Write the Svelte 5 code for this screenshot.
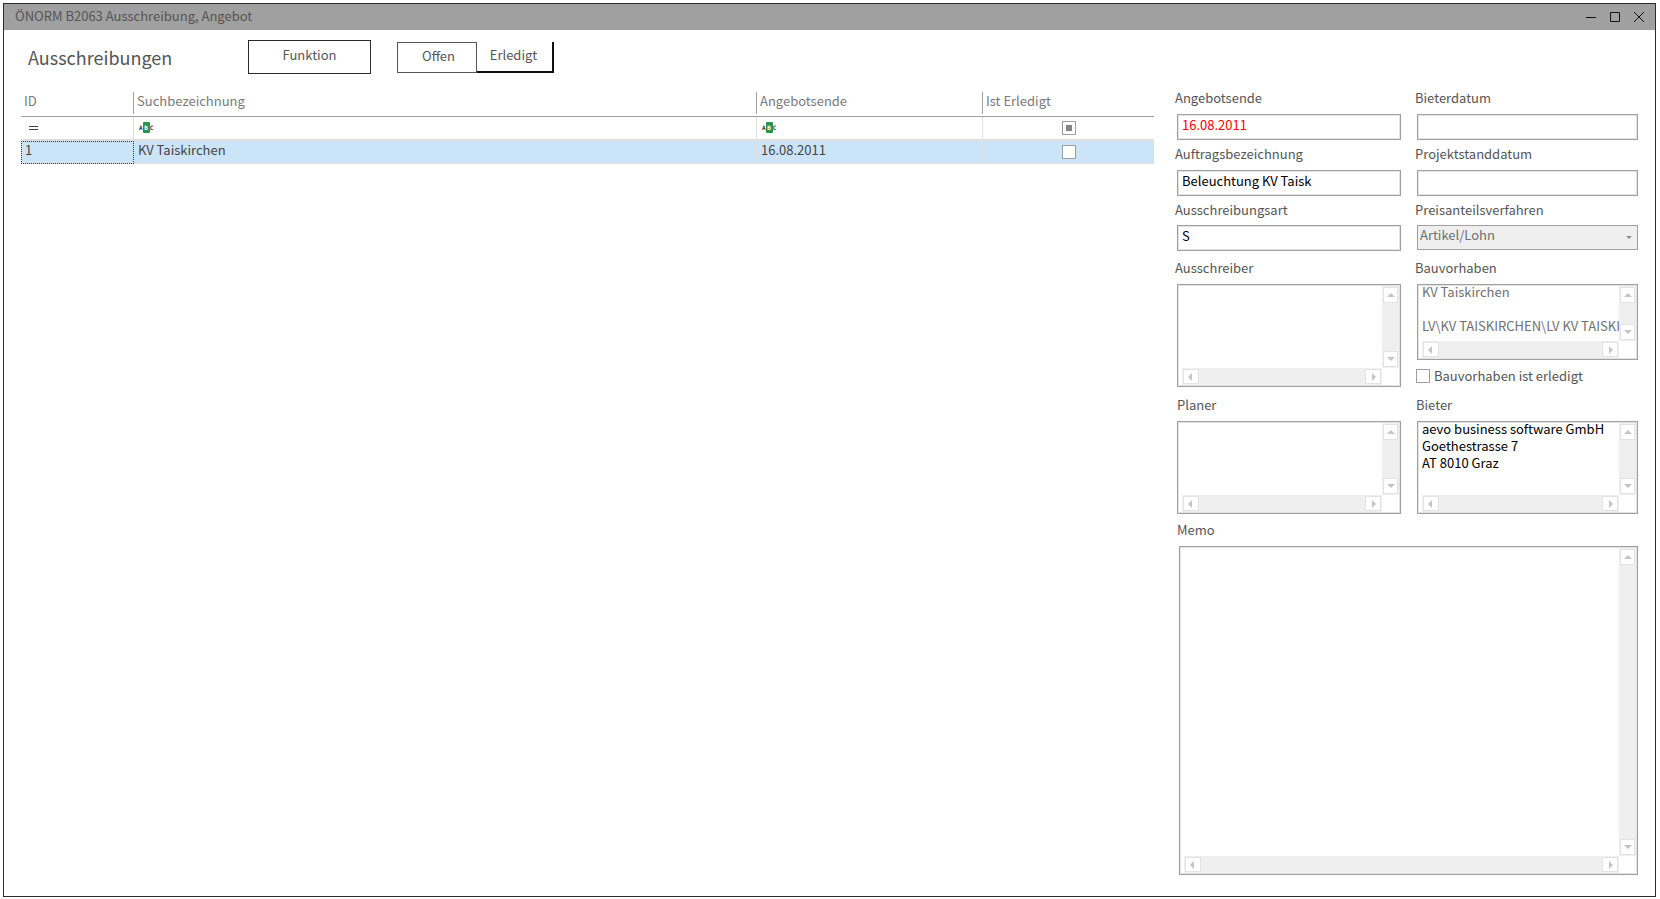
<script>
	let offers = [{ id: 1, name: 'KV Taiskirchen', end: '16.08.2011', done: false }];
	let filterDone = $state(true);

	let form = $state({
		end: '16.08.2011',
		bidDate: '',
		title: 'Beleuchtung KV Taisk',
		stateDate: '',
		kind: 'S',
		method: 'Artikel/Lohn',
		publisher: '',
		project: 'KV Taiskirchen\n\nLV\\KV TAISKIRCHEN\\LV KV TAISKIRCHEN',
		projectDone: false,
		planner: '',
		bidder: 'aevo business software GmbH\nGoethestrasse 7\nAT 8010 Graz',
		memo: ''
	});

	function scroll(id, x, y) {
		document.getElementById(id).scrollBy(x * 17, y * 17);
	}
</script>

{#snippet arrow(id, dir, label, x, y, d)}
	<button class="arrow {dir}" type="button" tabindex="-1" aria-label={label} onclick={() => scroll(id, x, y)}>
		<svg viewBox="0 0 8 8" width="8" height="8"><path {d} /></svg>
	</button>
{/snippet}

{#snippet area(id, label, key, readonly)}
	<label for={id}>{label}</label>
	<div class="area">
		<textarea {id} bind:value={form[key]} {readonly} wrap="off" spellcheck="false"></textarea>
		<div class="bar vertical">
			{@render arrow(id, 'up', 'Nach oben', 0, -1, 'M0 6h8L4 2z')}
			{@render arrow(id, 'down', 'Nach unten', 0, 1, 'M0 2h8L4 6z')}
		</div>
		<div class="bar horizontal">
			{@render arrow(id, 'left', 'Nach links', -1, 0, 'M5 0v8L1 4z')}
			{@render arrow(id, 'right', 'Nach rechts', 1, 0, 'M3 0v8l4-4z')}
		</div>
	</div>
{/snippet}

{#snippet abc()}
	<span class="abc"><span>A</span><b>B</b><span>C</span></span>
{/snippet}

<div class="window">
	<header class="titlebar">
		<span class="title">ÖNORM B2063 Ausschreibung, Angebot</span>
		<button type="button" aria-label="Minimieren">
			<svg viewBox="0 0 10 10"><path d="M0 5.5h10" /></svg>
		</button>
		<button type="button" aria-label="Maximieren">
			<svg viewBox="0 0 10 10"><path d="M.5.5h9v9h-9z" /></svg>
		</button>
		<button type="button" aria-label="Schließen">
			<svg viewBox="0 0 10 10"><path d="M0 0l10 10M10 0L0 10" /></svg>
		</button>
	</header>

	<main>
		<section class="list">
			<div class="toolbar">
				<h1>Ausschreibungen</h1>
				<button class="function" type="button">Funktion</button>
				<div class="tabs">
					<button class="open" type="button">Offen</button>
					<button class="done" type="button">Erledigt</button>
				</div>
			</div>

			<table>
				<colgroup>
					<col class="col-id" />
					<col />
					<col class="col-end" />
					<col class="col-done" />
				</colgroup>
				<thead>
					<tr>
						<th><span>ID</span></th>
						<th><span>Suchbezeichnung</span></th>
						<th><span>Angebotsende</span></th>
						<th><span>Ist Erledigt</span></th>
					</tr>
				</thead>
				<tbody>
					<tr class="filter">
						<td>
							<svg class="equals" viewBox="0 0 9 4" width="9" height="4"><path d="M0 .5h9M0 3.5h9" /></svg>
						</td>
						<td>{@render abc()}</td>
						<td>{@render abc()}</td>
						<td class="check">
							<input type="checkbox" aria-label="Filter Ist Erledigt" bind:indeterminate={filterDone} />
						</td>
					</tr>
					{#each offers as offer (offer.id)}
						<tr class="selected">
							<td class="focused">{offer.id}</td>
							<td>{offer.name}</td>
							<td>{offer.end}</td>
							<td class="check">
								<input type="checkbox" aria-label="Ist Erledigt" bind:checked={offer.done} />
							</td>
						</tr>
					{/each}
				</tbody>
			</table>
		</section>

		<form>
			<div class="field">
				<label for="end">Angebotsende</label>
				<input id="end" class="late" type="text" bind:value={form.end} />
			</div>
			<div class="field">
				<label for="bidDate">Bieterdatum</label>
				<input id="bidDate" type="text" bind:value={form.bidDate} />
			</div>

			<div class="field">
				<label for="title">Auftragsbezeichnung</label>
				<input id="title" type="text" bind:value={form.title} />
			</div>
			<div class="field">
				<label for="stateDate">Projektstanddatum</label>
				<input id="stateDate" type="text" bind:value={form.stateDate} />
			</div>

			<div class="field kind">
				<label for="kind">Ausschreibungsart</label>
				<input id="kind" type="text" bind:value={form.kind} />
			</div>
			<div class="field kind">
				<label for="method">Preisanteilsverfahren</label>
				<div class="select">
					<select id="method" bind:value={form.method} disabled>
						<option>Artikel/Lohn</option>
					</select>
					<svg viewBox="0 0 6 3" width="6" height="3"><path d="M0 0h6L3 3z" /></svg>
				</div>
			</div>

			<div class="field publisher">
				{@render area('publisher', 'Ausschreiber', 'publisher', false)}
			</div>
			<div class="field project">
				{@render area('project', 'Bauvorhaben', 'project', true)}
				<label class="tick">
					<input type="checkbox" bind:checked={form.projectDone} />
					Bauvorhaben ist erledigt
				</label>
			</div>

			<div class="field planner">
				{@render area('planner', 'Planer', 'planner', false)}
			</div>
			<div class="field bidder">
				{@render area('bidder', 'Bieter', 'bidder', false)}
			</div>

			<div class="field memo">
				{@render area('memo', 'Memo', 'memo', false)}
			</div>
		</form>
	</main>
</div>

<style>
	:global(body) {
		margin: 0;
		background: #fff;
	}

	:global(#app) {
		padding: 3px 4px 2px 3px;
	}

	.window {
		box-sizing: border-box;
		display: flex;
		flex-direction: column;
		min-height: calc(100vh - 5px);
		border: 1px solid #2b2b2b;
		color: #555;
		font: 13px/20px 'Noto Sans CJK SC', 'Noto Sans', sans-serif;
	}

	button,
	input,
	select,
	textarea {
		box-sizing: border-box;
		margin: 0;
		padding: 0;
		border: 0;
		border-radius: 0;
		background: #fff;
		color: inherit;
		font: inherit;
		appearance: none;
	}

	.titlebar {
		display: flex;
		align-items: center;
		height: 26px;
		padding: 0 4px 0 11px;
		background: #a0a0a0;
	}

	.title {
		flex: 1;
		padding-bottom: 3px;
	}

	.titlebar button {
		display: grid;
		place-items: center;
		width: 24px;
		height: 26px;
		background: none;
	}

	.titlebar svg {
		width: 10px;
		height: 10px;
		fill: none;
		stroke: #111;
	}

	main {
		flex: 1;
		display: flex;
		gap: 21px;
		padding: 0 17px 21px;
	}

	.list {
		flex: 1;
		min-width: 0;
	}

	.toolbar {
		display: flex;
		align-items: flex-start;
		height: 62px;
	}

	h1 {
		box-sizing: border-box;
		width: 227px;
		margin: 0;
		padding: 15px 0 0 7px;
		font-size: 18px;
		font-weight: 400;
		line-height: 24px;
	}

	.function {
		width: 123px;
		height: 34px;
		margin-top: 10px;
		padding-bottom: 5px;
		border: 1px solid #2b2b2b;
	}

	.tabs {
		display: flex;
		margin: 12px 0 0 26px;
	}

	.tabs button {
		height: 31px;
	}

	.open {
		width: 80px;
		padding: 0 0 4px 3px;
		border: 1px solid #555;
	}

	.done {
		width: 77px;
		padding: 0 2px 3px 0;
		border-right: 2px solid #111;
		border-bottom: 2px solid #111;
	}

	table {
		width: 100%;
		border-collapse: separate;
		border-spacing: 0;
		table-layout: fixed;
	}

	.col-id {
		width: 113px;
	}

	.col-end {
		width: 226px;
	}

	.col-done {
		width: 171px;
	}

	th {
		height: 24px;
		padding: 0;
		border-bottom: 1px solid #a0a0a0;
		color: #7a7a7a;
		font-weight: 400;
		text-align: left;
		vertical-align: top;
	}

	th span {
		display: block;
		height: 22px;
		line-height: 18px;
		padding-left: 3px;
		border-right: 1px solid #a0a0a0;
	}

	th:last-child span,
	td:last-child {
		border-right: 0;
	}

	td {
		box-sizing: border-box;
		height: 23px;
		padding: 0 0 4px 4px;
		border-right: 1px solid #e0e0e0;
		border-bottom: 1px solid #e0e0e0;
		line-height: 18px;
	}

	.filter td {
		height: 24px;
		padding: 0 0 1px 5px;
		border-bottom-width: 2px;
	}

	.selected td {
		background: #cce4f7;
		color: #444;
	}

	td.focused {
		outline: 1px dotted #333;
		outline-offset: -1px;
	}

	td.check,
	.filter td.check {
		padding: 0;
	}

	.check input {
		display: grid;
		margin: 0 auto;
	}

	.equals {
		display: block;
		margin-left: 3px;
		fill: none;
		stroke: #444;
		stroke-width: 1;
	}

	.abc {
		display: flex;
		align-items: center;
		color: #333;
		font: bold 6px/11px 'DejaVu Sans Mono', monospace;
	}

	.abc b {
		width: 7px;
		border-radius: 1px;
		background: #2f9146;
		color: #fff;
		text-align: center;
	}

	input[type='checkbox'] {
		display: grid;
		place-items: center;
		width: 14px;
		height: 14px;
		border: 1px solid #a0a0a0;
	}

	input[type='checkbox']:indeterminate::before,
	input[type='checkbox']:checked::before {
		content: '';
		width: 6px;
		height: 6px;
		background: #858585;
	}

	form {
		flex: 0 0 463px;
		display: grid;
		grid-template-columns: 226fr 223fr;
		grid-template-rows: repeat(5, auto) 1fr;
		column-gap: 14px;
		padding-top: 54px;
	}

	.field {
		display: flex;
		flex-direction: column;
		min-width: 0;
	}

	label {
		padding: 4px 0 6px;
	}

	.kind label {
		padding-bottom: 5px;
	}

	input[type='text'],
	.select,
	.area {
		border: 1px solid #a0a0a0;
		box-shadow: inset 0 0 0 1px #e3e3e3;
	}

	input[type='text'],
	.select {
		height: 26px;
		margin-left: 2px;
	}

	input[type='text'] {
		padding: 0 4px 5px;
		color: #000;
	}

	input.late {
		color: #f00;
	}

	.select {
		display: flex;
		align-items: center;
		box-sizing: border-box;
		height: 25px;
		padding-right: 5px;
		background: #efefef;
		box-shadow: none;
	}

	select {
		flex: 1;
		padding: 0 0 5px 2px;
		background: none;
		color: #707070;
		opacity: 1;
	}

	.select svg {
		fill: #909090;
	}

	.area {
		box-sizing: border-box;
		display: grid;
		grid-template: 1fr 17px / 1fr 17px;
		margin-left: 2px;
		padding: 1px 1px 1px 4px;
	}

	textarea {
		width: 100%;
		height: 100%;
		min-height: 0;
		margin-top: -3px;
		overflow: hidden;
		background: none;
		color: #000;
		line-height: 17px;
		resize: none;
		white-space: pre;
	}

	.project textarea {
		color: #707070;
	}

	.bar {
		display: flex;
		justify-content: space-between;
		padding: 1px;
		background: #efefef;
	}

	.vertical {
		flex-direction: column;
	}

	.arrow {
		display: grid;
		place-items: center;
		width: 15px;
		height: 16px;
		border: 1px solid #e3e3e3;
	}

	.horizontal .arrow {
		width: 16px;
		height: 15px;
	}

	.arrow svg {
		fill: #c4c4c4;
	}

	.publisher,
	.project {
		padding-top: 3px;
	}

	.memo {
		padding-top: 2px;
	}

	.planner,
	.bidder {
		padding-top: 4px;
	}

	.planner label,
	.memo label {
		padding-left: 2px;
	}

	.bidder label {
		padding-left: 1px;
	}

	.publisher .area {
		height: 103px;
	}

	.project .area {
		height: 76px;
	}

	.planner .area,
	.bidder .area {
		height: 93px;
	}

	label.tick {
		display: flex;
		align-items: center;
		gap: 4px;
		padding: 6px 0 0 1px;
	}

	.memo {
		grid-column: 1 / -1;
	}

	.memo .area {
		flex: 1;
		margin-left: 4px;
	}
</style>
